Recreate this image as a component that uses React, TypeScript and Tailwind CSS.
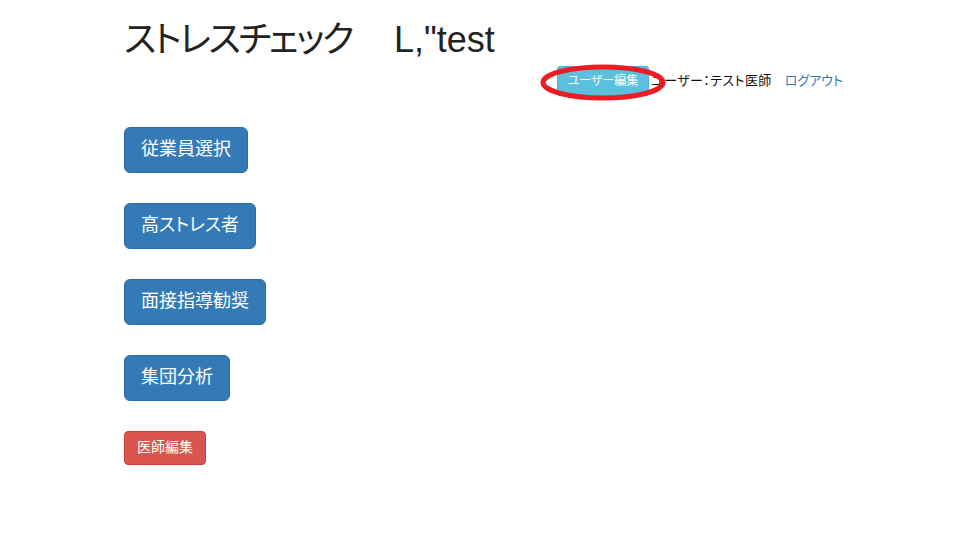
const jp = "font-['Liberation_Sans','Noto_Sans_CJK_JP',sans-serif] [font-feature-settings:'palt']";

const menu = ["従業員選択", "高ストレス者", "面接指導勧奨", "集団分析"];

export default function App() {
  return (
    <main className={`min-h-[558px] w-full bg-white text-[#333] ${jp}`}>
      <div className="mx-auto w-[750px] px-[15px]">
        <h1 className="mt-[20px] mb-[6px] text-[36px] leading-[1.1] font-normal text-[#222]">
          <span className="tracking-[-2.4px]">ストレスチェック</span>
          <span className="ml-[6px]">　L,&quot;test</span>
        </h1>
        <div className="flex h-[30px] items-center justify-end">
          <div className="relative">
            <button className="h-[30px] rounded-[3px] border border-[#46b8da] bg-[#5bc0de] px-[10px] text-[12px] text-white">
              ユーザー編集
            </button>
            <svg
              className="pointer-events-none absolute left-[-17px] top-[-2px]"
              width="126"
              height="37"
              viewBox="0 0 126 37"
            >
              <ellipse cx="63" cy="18.5" rx="60" ry="15.5" fill="none" stroke="#ec1c24" strokeWidth="5" />
            </svg>
          </div>
          <span className="ml-[2px] text-[13px] tracking-[0.4px] text-[#111]">ユーザー：テスト医師</span>
          <a href="#" className="ml-[13px] mr-[1px] text-[13px] text-[#337ab7]">
            ログアウト
          </a>
        </div>
        <div className="mt-[31px] flex flex-col items-start gap-[30px]">
          {menu.map((m) => (
            <button
              key={m}
              className="h-[46px] rounded-[6px] border border-[#2e6da4] bg-[#337ab7] px-[16px] text-[18px] text-white"
            >
              {m}
            </button>
          ))}
          <button className="h-[34px] rounded-[4px] border border-[#d43f3a] bg-[#d9534f] px-[12px] text-[14px] text-white">
            医師編集
          </button>
        </div>
      </div>
    </main>
  );
}
